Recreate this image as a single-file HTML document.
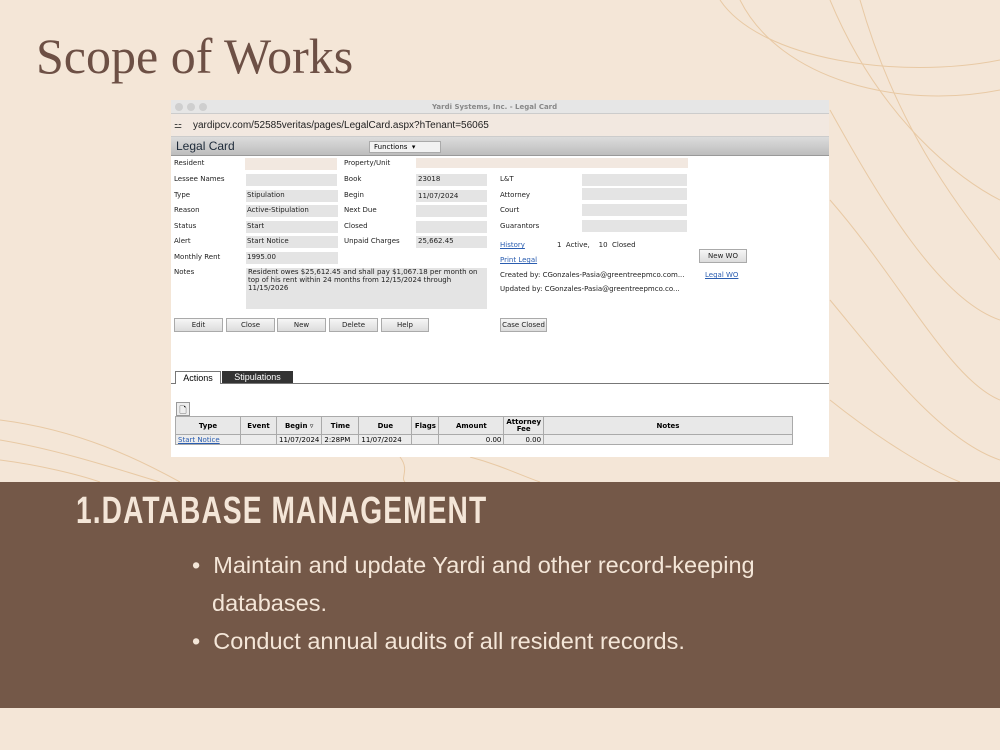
<!DOCTYPE html>
<html><head><meta charset="utf-8"><style>
*{margin:0;padding:0;box-sizing:border-box}
body{width:1000px;height:750px;background:#f4e6d7;position:relative;overflow:hidden;font-family:"Liberation Sans",sans-serif}
.a{position:absolute}
.t{font-family:"DejaVu Sans","Liberation Sans",sans-serif;font-size:7px;color:#222;position:absolute;white-space:nowrap}
.f{position:absolute;background:#e4e4e4;height:12px}
.btn{position:absolute;top:318px;height:14px;background:linear-gradient(#f6f6f6,#dcdcdc);border:1px solid #aaa;font-size:7px;font-family:"DejaVu Sans",sans-serif;text-align:center;line-height:12px;color:#222}
.lnk{color:#2a5db0;text-decoration:underline}
table{border-collapse:collapse;font-family:"DejaVu Sans",sans-serif;font-size:7px}
td,th{border:1px solid #aaa;padding:0 2px}
th{background:#e8e8e8;height:18px}
</style></head><body>
<svg class="a" style="left:0;top:0" width="1000" height="482" fill="none" stroke="#e8c9a4" stroke-width="1">
<path d="M720 0 C760 60 900 80 1000 60"/><path d="M740 0 C780 80 900 110 1000 90"/>
<path d="M830 0 C880 120 960 180 1000 200"/><path d="M860 0 C900 140 970 220 1000 260"/>
<path d="M830 110 C880 200 940 300 1000 320"/><path d="M830 200 C900 280 950 380 1000 400"/>
<path d="M830 300 C880 360 940 440 1000 460"/><path d="M830 400 C880 440 930 470 960 482"/>
<path d="M0 440 C60 450 120 470 160 482"/><path d="M0 420 C80 430 140 460 180 482"/>
<path d="M0 460 C40 465 80 475 100 482"/><path d="M400 457 C410 470 400 478 405 482"/>
<path d="M470 457 C500 465 520 475 540 482"/>
</svg>
<div class="a" style="left:36px;top:27px;font-family:'Liberation Serif',serif;font-size:50px;color:#6d5045">Scope of Works</div>

<div class="a" style="left:171px;top:100px;width:658px;height:357px;background:#fff"></div>
<div class="a" style="left:171px;top:100px;width:658px;height:14px;background:#e6e6e6;border-bottom:1px solid #ccc"></div>
<div class="a" style="left:175px;top:103px;width:8px;height:8px;border-radius:50%;background:#cfcfcf"></div>
<div class="a" style="left:187px;top:103px;width:8px;height:8px;border-radius:50%;background:#cfcfcf"></div>
<div class="a" style="left:199px;top:103px;width:8px;height:8px;border-radius:50%;background:#cfcfcf"></div>
<div class="t" style="left:432px;top:103px;color:#888;font-weight:bold">Yardi Systems, Inc. - Legal Card</div>
<div class="a" style="left:171px;top:114px;width:658px;height:23px;background:#f2e8e0;border-bottom:1px solid #ccc"></div>
<div class="a" style="left:174px;top:120px;font-size:9px;color:#333">⚍</div>
<div class="a" style="left:193px;top:120px;font-size:10px;color:#222">yardipcv.com/52585veritas/pages/LegalCard.aspx?hTenant=56065</div>
<div class="a" style="left:171px;top:137px;width:658px;height:19px;background:linear-gradient(#dcdcdc,#bdbdbd);border-bottom:1px solid #999"></div>
<div class="a" style="left:176px;top:139px;font-size:12px;color:#1e2b3a">Legal Card</div>
<div class="a" style="left:369px;top:141px;width:72px;height:12px;background:#f2f2f2;border:1px solid #aaa;font-size:7px;line-height:10px;padding-left:4px;font-family:'DejaVu Sans',sans-serif">Functions &nbsp;▾</div>

<div class="t" style="left:174px;top:159px">Resident</div><div class="a" style="left:245px;top:158px;width:92px;height:12px;background:#f2e8e0"></div>
<div class="t" style="left:344px;top:159px">Property/Unit</div><div class="a" style="left:416px;top:158px;width:272px;height:10px;background:#f2e8e0"></div>
<div class="t" style="left:174px;top:175px">Lessee Names</div><div class="f" style="left:246px;top:174px;width:91px"></div>
<div class="t" style="left:174px;top:191px">Type</div><div class="f" style="left:246px;top:190px;width:92px"></div><div class="t" style="left:247px;top:191px">Stipulation</div>
<div class="t" style="left:174px;top:206px">Reason</div><div class="f" style="left:246px;top:205px;width:92px"></div><div class="t" style="left:247px;top:206px">Active-Stipulation</div>
<div class="t" style="left:174px;top:222px">Status</div><div class="f" style="left:246px;top:221px;width:92px"></div><div class="t" style="left:247px;top:222px">Start</div>
<div class="t" style="left:174px;top:237px">Alert</div><div class="f" style="left:246px;top:236px;width:92px"></div><div class="t" style="left:247px;top:237px">Start Notice</div>
<div class="t" style="left:174px;top:253px">Monthly Rent</div><div class="f" style="left:246px;top:252px;width:92px"></div><div class="t" style="left:247px;top:253px">1995.00</div>
<div class="t" style="left:174px;top:268px">Notes</div><div class="f" style="left:246px;top:268px;width:241px;height:41px"></div>
<div class="t" style="left:248px;top:268px;line-height:8px">Resident owes $25,612.45 and shall pay $1,067.18 per month on<br>top of his rent within 24 months from 12/15/2024 through<br>11/15/2026</div>

<div class="t" style="left:344px;top:175px">Book</div><div class="f" style="left:416px;top:174px;width:71px"></div><div class="t" style="left:418px;top:175px">23018</div>
<div class="t" style="left:344px;top:191px">Begin</div><div class="f" style="left:416px;top:190px;width:71px"></div><div class="t" style="left:418px;top:192px">11/07/2024</div>
<div class="t" style="left:344px;top:206px">Next Due</div><div class="f" style="left:416px;top:205px;width:71px"></div>
<div class="t" style="left:344px;top:222px">Closed</div><div class="f" style="left:416px;top:221px;width:71px"></div>
<div class="t" style="left:344px;top:237px">Unpaid Charges</div><div class="f" style="left:416px;top:236px;width:71px"></div><div class="t" style="left:418px;top:237px">25,662.45</div>

<div class="t" style="left:500px;top:175px">L&amp;T</div><div class="f" style="left:582px;top:174px;width:105px"></div>
<div class="t" style="left:500px;top:191px">Attorney</div><div class="f" style="left:582px;top:188px;width:105px"></div>
<div class="t" style="left:500px;top:206px">Court</div><div class="f" style="left:582px;top:204px;width:105px"></div>
<div class="t" style="left:500px;top:222px">Guarantors</div><div class="f" style="left:582px;top:220px;width:105px"></div>
<div class="t lnk" style="left:500px;top:241px">History</div><div class="t" style="left:557px;top:241px">1 &nbsp;Active, &nbsp;&nbsp;&nbsp;10 &nbsp;Closed</div>
<div class="t lnk" style="left:500px;top:256px">Print Legal</div>
<div class="t" style="left:500px;top:271px">Created by: CGonzales-Pasia@greentreepmco.com...</div>
<div class="t" style="left:500px;top:285px">Updated by: CGonzales-Pasia@greentreepmco.co...</div>
<div class="btn" style="left:699px;top:249px;width:48px">New WO</div>
<div class="t lnk" style="left:705px;top:271px">Legal WO</div>

<div class="btn" style="left:174px;width:49px">Edit</div>
<div class="btn" style="left:226px;width:49px">Close</div>
<div class="btn" style="left:277px;width:49px">New</div>
<div class="btn" style="left:329px;width:49px">Delete</div>
<div class="btn" style="left:381px;width:48px">Help</div>
<div class="btn" style="left:500px;width:47px">Case Closed</div>

<div class="a" style="left:171px;top:383px;width:658px;height:1px;background:#777"></div>
<div class="a" style="left:175px;top:371px;width:46px;height:13px;border:1px solid #777;border-bottom:none;background:#fff;font-size:9px;text-align:center;line-height:12px">Actions</div>
<div class="a" style="left:222px;top:371px;width:71px;height:12px;background:#333;color:#fff;font-size:9px;text-align:center;line-height:12px">Stipulations</div>
<div class="a" style="left:176px;top:402px;width:14px;height:14px;border:1px solid #999;background:#eee;font-size:9px;text-align:center">🗋</div>
<table class="a" style="left:175px;top:416px;width:618px">
<tr><th style="width:65px">Type</th><th style="width:36px">Event</th><th style="width:42px">Begin ▿</th><th style="width:37px">Time</th><th style="width:53px">Due</th><th style="width:27px">Flags</th><th style="width:65px">Amount</th><th style="width:38px;line-height:7px">Attorney<br>Fee</th><th>Notes</th></tr>
<tr style="background:#ececec;height:10px"><td class="lnk">Start Notice</td><td></td><td>11/07/2024</td><td>2:28PM</td><td>11/07/2024</td><td></td><td style="text-align:right">0.00</td><td style="text-align:right">0.00</td><td></td></tr>
</table>

<div class="a" style="left:0;top:482px;width:1000px;height:226px;background:#745848"></div>
<div class="a" style="left:76px;top:490px;font-family:'Liberation Sans',sans-serif;font-weight:bold;font-size:38px;color:#f4e6d8;letter-spacing:1.5px;transform:scaleX(0.74);transform-origin:left;white-space:nowrap">1.DATABASE MANAGEMENT</div>
<div class="a" style="left:192px;top:546px;font-size:23.5px;color:#f4e6d8;line-height:38px;width:640px">
<div style="padding-left:20px;text-indent:-20px">•&nbsp; Maintain and update Yardi and other record-keeping databases.</div>
<div style="padding-left:20px;text-indent:-20px">•&nbsp; Conduct annual audits of all resident records.</div>
</div>
</body></html>
